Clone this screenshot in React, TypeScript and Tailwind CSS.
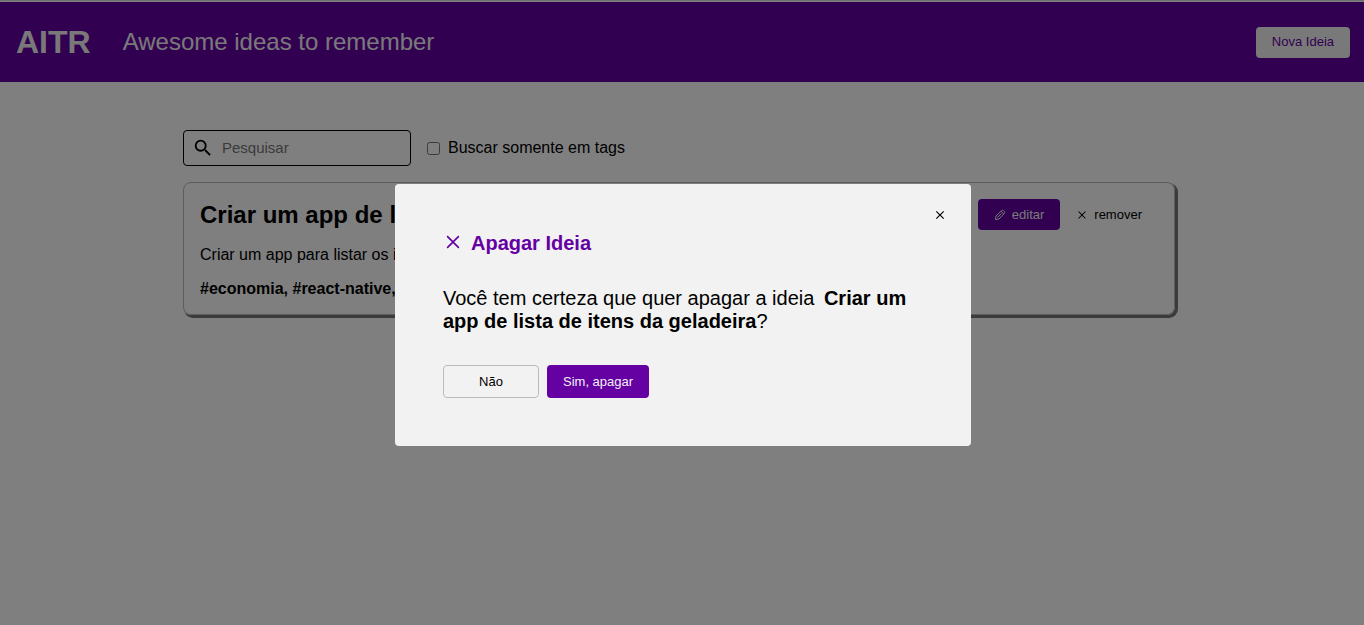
import { MdClose, MdSearch } from "react-icons/md";
import { CgClose } from "react-icons/cg";

function PencilIcon() {
  return (
    <svg
      width="12"
      height="12"
      viewBox="0 0 24 24"
      fill="none"
      stroke="currentColor"
      strokeWidth="2"
      strokeLinejoin="round"
      aria-hidden="true"
    >
      <path d="M3 21l1-7L15 3.5c1.500-1.500 3-1.500 4.500 0l1 1c1.500 1.500 1.500 3 0 4.500L10 20z" />
      <path d="M14 4.500l5.500 5.500M7 17l8-8" />
    </svg>
  );
}

function Header() {
  return (
    <header className="flex items-center justify-between bg-[#6500a3] py-6 pr-3.5 pl-4 text-[#f2f2f2]">
      <div className="flex h-8 items-center gap-8">
        <h1 className="text-[32px] leading-8 font-bold">AITR</h1>
        <p className="text-2xl">Awesome ideas to remember</p>
      </div>
      <button
        type="button"
        className="h-[31px] rounded bg-[#f2f2f2] px-4 text-[13px] text-[#6500a3]"
      >
        Nova Ideia
      </button>
    </header>
  );
}

function SearchBar() {
  return (
    <div className="flex items-center gap-4">
      <div className="flex h-9 w-[228px] items-center gap-2 rounded border border-black px-2">
        <MdSearch size={22} className="shrink-0" aria-hidden="true" />
        <input
          type="search"
          aria-label="Pesquisar"
          placeholder="Pesquisar"
          className="w-full min-w-0 bg-transparent text-[15px] outline-none placeholder:text-[#757575]"
        />
      </div>
      <label className="flex items-center gap-2 text-base">
        <input type="checkbox" className="size-[13px]" />
        Buscar somente em tags
      </label>
    </div>
  );
}

function IdeaCard() {
  return (
    <article className="mt-4 rounded-lg border border-[#bbbbbb] p-4 shadow-[2px_2px_0_1px_#777777]">
      <div className="flex items-center justify-between">
        <h2 className="text-2xl leading-[30px] font-bold">
          Criar um app de lista de itens da geladeira
        </h2>
        <div className="flex text-[13px]">
          <button
            type="button"
            className="flex h-[31px] items-center gap-1.5 rounded bg-[#6500a3] px-4 text-[#f2f2f2]"
          >
            <PencilIcon />
            editar
          </button>
          <button type="button" className="flex h-[31px] items-center gap-1.5 px-4">
            <CgClose size={12} aria-hidden="true" />
            remover
          </button>
        </div>
      </div>
      <p className="mt-4 leading-[18px]">Criar um app para listar os itens da geladeira</p>
      <p className="mt-4 leading-[18px] font-bold">#economia, #react-native, #app</p>
    </article>
  );
}

function DeleteDialog() {
  return (
    <div className="fixed inset-0 flex items-start justify-center bg-black/50 pt-[184px] pl-0.5">
      <div
        role="dialog"
        aria-modal="true"
        aria-labelledby="dialog-title"
        className="relative w-xl rounded bg-[#f2f2f2] p-12"
      >
        <button type="button" aria-label="Fechar" className="absolute top-6 right-6">
          <MdClose size={14} />
        </button>
        <h2
          id="dialog-title"
          className="flex items-start gap-2 text-xl leading-[23px] font-bold text-[#6500a3]"
        >
          <CgClose size={20} aria-hidden="true" />
          Apagar Ideia
        </h2>
        <p className="mt-8 text-xl leading-[23px]">
          Você tem certeza que quer apagar a ideia{" "}
          <strong className="ml-1">Criar um app de lista de itens da geladeira</strong>?
        </p>
        <div className="mt-8 flex gap-2 text-[13px]">
          <button type="button" className="h-[33px] w-24 rounded border border-[#bbbbbb]">
            Não
          </button>
          <button type="button" className="h-[33px] rounded bg-[#6500a3] px-4 text-[#f2f2f2]">
            Sim, apagar
          </button>
        </div>
      </div>
    </div>
  );
}

export default function App() {
  return (
    <div className="min-h-screen border-t border-[#dde1e6] bg-white pt-px font-['Liberation_Sans',Arial,sans-serif] text-black">
      <Header />
      <main className="py-12 pr-1.5">
        <div className="mx-auto max-w-[992px]">
          <SearchBar />
          <IdeaCard />
        </div>
      </main>
      <DeleteDialog />
    </div>
  );
}
